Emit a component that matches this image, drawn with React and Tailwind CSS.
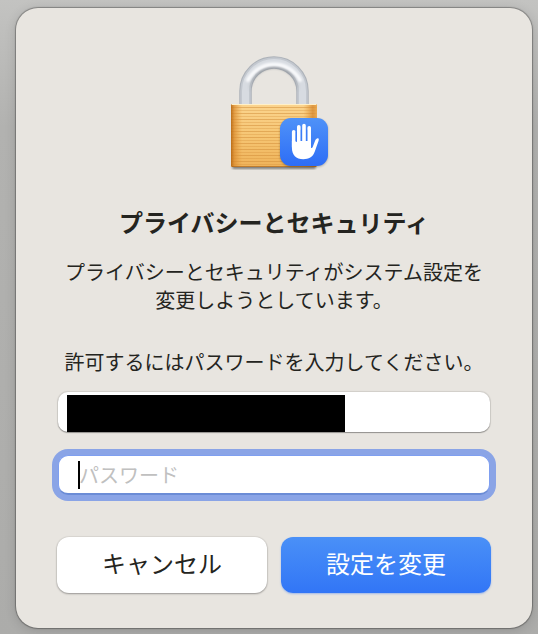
import React, { useState } from 'react';

const GRAIN_LINES = Array.from({ length: 20 }, (_, i) => 59 + i * 3);

const LockIcon = () => (
  <svg className="w-32 h-32" viewBox="0 0 128 128" fill="none" aria-hidden="true">
    <defs>
      <linearGradient id="wood" x1="0" y1="56" x2="0" y2="119" gradientUnits="userSpaceOnUse">
        <stop offset="0" stopColor="#fbd48e" />
        <stop offset="0.5" stopColor="#f6c674" />
        <stop offset="1" stopColor="#efb35a" />
      </linearGradient>
      <linearGradient id="woodEdge" x1="21" y1="0" x2="107" y2="0" gradientUnits="userSpaceOnUse">
        <stop offset="0" stopColor="#b56510" stopOpacity="0.9" />
        <stop offset="0.04" stopColor="#d9892c" stopOpacity="0.7" />
        <stop offset="0.13" stopColor="#e59a3a" stopOpacity="0" />
        <stop offset="0.84" stopColor="#e59a3a" stopOpacity="0" />
        <stop offset="0.95" stopColor="#d4842a" stopOpacity="0.75" />
        <stop offset="1" stopColor="#e9a64b" stopOpacity="0.9" />
      </linearGradient>
      <linearGradient id="innerShade" x1="0" y1="18" x2="0" y2="44" gradientUnits="userSpaceOnUse">
        <stop offset="0" stopColor="#7d8288" />
        <stop offset="1" stopColor="#7d8288" stopOpacity="0" />
      </linearGradient>
      <linearGradient id="badge" x1="0" y1="70" x2="0" y2="118" gradientUnits="userSpaceOnUse">
        <stop offset="0" stopColor="#4f92f8" />
        <stop offset="1" stopColor="#2d6df6" />
      </linearGradient>
      <filter id="soft" x="-20%" y="-20%" width="140%" height="140%">
        <feGaussianBlur stdDeviation="1" />
      </filter>
    </defs>

    {/* shackle */}
    <path d="M35.5 57V43a28.5 28.5 0 0 1 57 0V57" stroke="#adb2b9" strokeWidth="12.5" />
    <path d="M35.5 57V43a28.5 28.5 0 0 1 57 0V57" stroke="#c3c8cf" strokeWidth="10.5" />
    <path d="M35.5 57V43a28.5 28.5 0 0 1 57 0V57" stroke="#d7dbe1" strokeWidth="7" />
    <path d="M40 43a24 24 0 0 1 48 0" stroke="url(#innerShade)" strokeWidth="3" opacity="0.7" filter="url(#soft)" />
    <path d="M38 32a29.5 29.5 0 0 1 52 0" stroke="#f9fafc" strokeWidth="4" strokeLinecap="round" filter="url(#soft)" />

    {/* body */}
    <rect x="22" y="117" width="84" height="4" rx="2" fill="#000" opacity="0.45" filter="url(#soft)" />
    <rect x="21" y="56" width="86" height="63" rx="1.5" fill="url(#wood)" />
    {GRAIN_LINES.map((y) => (
      <path key={y} d={`M21 ${y + 0.5}H107`} stroke="#cf8a35" strokeWidth="1" opacity={y % 2 ? 0.5 : 0.3} />
    ))}
    <rect x="21" y="56" width="86" height="63" rx="1.5" fill="url(#woodEdge)" />
    <path d="M22 56.5H106" stroke="#fff0c9" />
    <path d="M22 118.5H106" stroke="#a8651d" opacity="0.7" />

    {/* hand badge */}
    <rect x="70" y="71" width="48" height="48" rx="11" fill="#000" opacity="0.25" filter="url(#soft)" />
    <rect x="70" y="70" width="48" height="48" rx="11" fill="url(#badge)" />
    <path d="M83.7 83.8V99M88.8 78.8V97M94 77.6V97M99.2 79.8V97" stroke="#fff" strokeWidth="3.6" strokeLinecap="round" />
    <path
      d="M81.9 93H101V99.8C101.7 100.2 102.3 99.9 102.7 99.1L105.1 92.7C105.7 90.9 107.2 89.9 108.2 90.3C109 90.7 108.9 91.8 108.5 93L104.8 103.5C102.8 109.3 98.7 111.2 93.3 111.2C86 111.2 81.9 107 81.9 99.5Z"
      fill="#fff"
    />
    <path d="M86.3 84V93.5M91.4 82V92.5M96.6 82V92.5" stroke="#3a7cf7" strokeWidth="1.2" strokeLinecap="round" />
  </svg>
);

const App = () => {
  const [password, setPassword] = useState('');

  return (
    <div
      lang="ja"
      className="min-h-screen flex pt-2 pr-1.5 pb-1.5 pl-4 bg-linear-to-b from-[#c3c3c1] via-[#b2b2b0] via-20% to-[#acacaa] font-['Noto_Sans_CJK_JP',sans-serif] text-[#242420]"
    >
      <form
        onSubmit={(e) => e.preventDefault()}
        className="flex-1 flex flex-col items-center px-[41px] pt-10 pb-[35px] rounded-[22px] bg-[#e8e5e0] shadow-[0_0_1px_1px_rgba(0,0,0,0.3),0_2px_12px_rgba(0,0,0,0.15)]"
      >
        <LockIcon />
        <h1 className="mt-[30px] text-2xl leading-8 font-bold">プライバシーとセキュリティ</h1>
        <p className="mt-5 text-xl leading-7 text-center">
          プライバシーとセキュリティがシステム設定を
          <br />
          変更しようとしています。
        </p>
        <p className="mt-[34px] text-xl leading-7 text-center">許可するにはパスワードを入力してください。</p>

        <div className="relative mt-4 w-full px-px">
          <input
            type="text"
            aria-label="ユーザ名"
            readOnly
            className="block w-full h-10 rounded-[10px] bg-white px-5 text-xl outline-none shadow-[0_0_1px_1px_rgba(0,0,0,0.1),0_1px_1px_rgba(0,0,0,0.3)]"
          />
          <span className="absolute left-2.5 top-[3px] bottom-0 w-[64%] bg-black" />
        </div>

        <div className="relative mt-[23px] w-full px-px">
          <input
            type="password"
            aria-label="パスワード"
            placeholder="パスワード"
            value={password}
            onChange={(e) => setPassword(e.target.value)}
            className="block w-full h-10 rounded-[10px] bg-white border border-[#7f9ff0] border-b-2 border-b-[#6b8cd6] px-5 text-xl placeholder:text-[#c0c0c0] outline-none ring-6 ring-[#8aa4e6]"
          />
          <span className="absolute left-[21px] top-1.5 h-7 w-0.5 bg-black" />
        </div>

        <div className="mt-[42px] w-full grid grid-cols-2 gap-3.5">
          <button
            type="button"
            className="h-14 pb-1 rounded-xl bg-white text-2xl shadow-[0_0_1px_1px_rgba(0,0,0,0.06),0_1px_2px_rgba(0,0,0,0.3)]"
          >
            キャンセル
          </button>
          <button
            type="submit"
            className="h-14 pb-1 rounded-xl bg-linear-to-b from-[#4a90f7] to-[#3275f6] text-2xl text-white shadow-[0_1px_2px_rgba(50,117,246,0.4)]"
          >
            設定を変更
          </button>
        </div>
      </form>
    </div>
  );
};

export default App;
